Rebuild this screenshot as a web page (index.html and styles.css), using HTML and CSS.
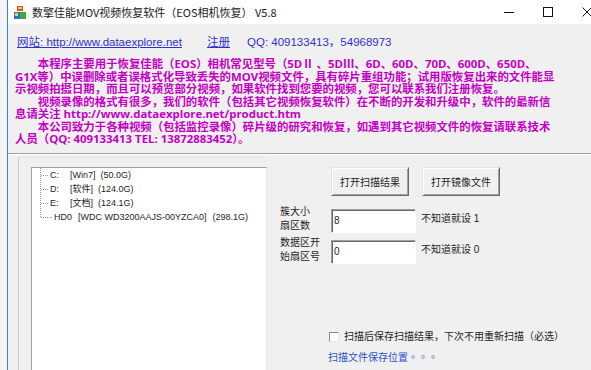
FILE: index.html
```
<html>

  <head>

    <title>
      数擎佳能MOV视频恢复软件
    </title>

    <link rel="stylesheet" href="styles.css">

  </head>

  <body>

  <div class = "window">

    <div class = "titlebar">
      <svg class = "appIcon" width = "12" height = "13" viewBox = "0 0 12 13">
        <rect x = "3" y = "0" width = "6" height = "5" fill = "#e0502a"/>
        <rect x = "4" y = "1" width = "4" height = "2" fill = "#f6c040"/>
        <rect x = "0" y = "6" width = "6" height = "7" fill = "#2f6fd0"/>
        <rect x = "6" y = "6" width = "6" height = "7" fill = "#3aa84a"/>
        <rect x = "1" y = "7" width = "3" height = "3" fill = "#f2d23c"/>
      </svg>
      <span class = "title">数擎佳能MOV视频恢复软件（EOS相机恢复） V5.8</span>
      <div class = "controls">
        <div class = "ctl">
          <svg width = "10" height = "10" viewBox = "0 0 10 10"><path d = "M0 5.5h10" stroke = "#111" stroke-width = "1"/></svg>
        </div>
        <div class = "ctl">
          <svg width = "10" height = "10" viewBox = "0 0 10 10"><rect x = "0.5" y = "0.5" width = "9" height = "9" fill = "none" stroke = "#111"/></svg>
        </div>
        <div class = "ctl">
          <svg width = "10" height = "10" viewBox = "0 0 10 10"><path d = "M0.5 0.5l9 9M9.5 0.5l-9 9" stroke = "#111"/></svg>
        </div>
      </div>
    </div>

    <div class = "header">

      <div class = "links">
        <span class = "site"><a href = "#">网站: http://www.dataexplore.net</a></span>
        <span class = "reg"><a href = "#">注册</a></span>
        <span>QQ: 409133413，54968973</span>
      </div>

      <p class = "intro">
        　　本程序主要用于恢复佳能（EOS）相机常见型号（5DⅡ 、5DⅢ、6D、60D、70D、600D、650D、<br>
        G1X等）中误删除或者误格式化导致丢失的MOV视频文件，具有碎片重组功能；试用版恢复出来的文件能显<br>
        示视频拍摄日期，而且可以预览部分视频，如果软件找到您要的视频，您可以联系我们注册恢复。<br>
        　　视频录像的格式有很多，我们的软件（包括其它视频恢复软件）在不断的开发和升级中，软件的最新信<br>
        息请关注 http://www.dataexplore.net/product.htm<br>
        　　本公司致力于各种视频（包括监控录像）碎片级的研究和恢复，如遇到其它视频文件的恢复请联系技术<br>
        人员（QQ: 409133413 TEL: 13872883452）。
      </p>

    </div>

    <div class = "sep"></div>

    <div class = "lower">

      <div class = "drives">
        <div class = "tree">
          <ul class = "branches">
            <li><span class = "drv">C:</span><span>[Win7]</span><span class = "size">(50.0G)</span></li>
            <li><span class = "drv">D:</span><span>[软件]</span><span class = "size">(124.0G)</span></li>
            <li><span class = "drv">E:</span><span>[文档]</span><span class = "size">(124.1G)</span></li>
            <li class = "disk"><span class = "drv">HD0</span><span>[WDC WD3200AAJS-00YZCA0]</span><span class = "size">(298.1G)</span></li>
          </ul>
        </div>
      </div>

      <div class = "options">

        <div class = "buttons">
          <button class = "btn">打开扫描结果</button>
          <button class = "btn">打开镜像文件</button>
        </div>

        <div class = "field first">
          <div class = "label">簇大小<br>扇区数</div>
          <input type = "text" value = "8">
          <span class = "hint">不知道就设 1</span>
        </div>

        <div class = "field second">
          <div class = "label">数据区开<br>始扇区号</div>
          <input type = "text" value = "0">
          <span class = "hint">不知道就设 0</span>
        </div>

        <div class = "check">
          <span class = "box"></span>
          <span>扫描后保存扫描结果，下次不用重新扫描（必选）</span>
        </div>

        <div class = "savePath">扫描文件保存位置<span class = "dots">。。。</span></div>

      </div>

    </div>

  </div>

  </body>

</html>
```

FILE: styles.css
```
*
{
  box-sizing: border-box;
}

html, body
{
  margin: 0;
  height: 100%;
  overflow: hidden;
}

body
{
  background: #f4f4f4;
  font-family: "Liberation Sans", "Noto Sans CJK SC", sans-serif;
  color: #1e1e1e;
}

.window
{
  margin-left: 7px;
  width: 599px;
  height: 370px;
  border-left: 1px solid #2f86d8;
  background: #f0f0f0;
}

.titlebar
{
  height: 24px;
  background: #ffffff;
  display: flex;
  align-items: center;
}

.appIcon
{
  margin-left: 6px;
}

.title
{
  margin-left: 6px;
  font-family: "Noto Sans CJK SC", sans-serif;
  font-size: 11px;
  color: #1b1b1b;
}

.controls
{
  margin-left: auto;
  display: flex;
}

.ctl
{
  width: 39px;
  height: 24px;
  display: flex;
  align-items: center;
  justify-content: center;
}

.header
{
  padding: 11px 0 0 9px;
}

.links
{
  display: flex;
  font-size: 11.5px;
  line-height: 14px;
  color: #3030c8;
}

.links a
{
  color: #3030c8;
}

.site
{
  width: 190px;
}

.reg
{
  width: 40px;
}

.intro
{
  margin: 9px 0 0 -2px;
  font-family: "Open Sans", "Noto Sans CJK SC", sans-serif;
  font-weight: bold;
  font-size: 11.4px;
  line-height: 12.5px;
  color: #c200c2;
  white-space: nowrap;
}

.sep
{
  margin-top: 7px;
  border-top: 1px solid #a0a0a0;
  border-bottom: 1px solid #ffffff;
}

.lower
{
  display: flex;
}

.drives
{
  margin: 2px 0 0 10px;
  border-top: 1px solid #e2e2e2;
  border-left: 1px solid #c8c8c8;
  padding: 9px 0 0 12px;
}

.tree
{
  width: 236px;
  height: 220px;
  background: #ffffff;
  border: 1px solid;
  border-color: #a0a0a0 #e6e6e6 #e6e6e6 #a0a0a0;
  padding-left: 8px;
}

.branches
{
  margin: 0;
  padding: 0;
  list-style: none;
  height: 49px;
  border-left: 1px dotted #9a9a9a;
  font-size: 9px;
  line-height: 14px;
  white-space: nowrap;
}

.branches li
{
  height: 14px;
}

.branches li::before
{
  content: "";
  display: inline-block;
  width: 7px;
  margin-right: 2px;
  vertical-align: middle;
  border-top: 1px dotted #9a9a9a;
}

.branches li.disk::before
{
  width: 11px;
}

.drv
{
  display: inline-block;
  width: 20px;
}

.disk .drv
{
  width: 24px;
}

.size
{
  margin-left: 5px;
}

.disk .size
{
  margin-left: 6px;
}

.options
{
  margin-left: 13px;
  padding-top: 12px;
  font-size: 10px;
  line-height: 14px;
}

.buttons
{
  display: flex;
  gap: 13px;
  margin-left: 51px;
}

.btn
{
  width: 78px;
  height: 29px;
  padding: 0;
  font-family: "Liberation Sans", "Noto Sans CJK SC", sans-serif;
  font-size: 10px;
  color: #1e1e1e;
  background: #f0f0f0;
  border: 1px solid;
  border-color: #e4e4e4 #6a6a6a #6a6a6a #e4e4e4;
  box-shadow: inset 1px 1px #ffffff, inset -1px -1px #a0a0a0;
}

.field
{
  display: flex;
  align-items: flex-end;
}

.first
{
  margin-top: 9px;
}

.second
{
  margin-top: 3px;
}

.label
{
  width: 51px;
}

.field input
{
  width: 85px;
  height: 24px;
  padding: 0 2px;
  font-family: "Liberation Sans", sans-serif;
  font-size: 10px;
  color: #1e1e1e;
  background: #ffffff;
  border: 1px solid;
  border-color: #a0a0a0 #ffffff #ffffff #a0a0a0;
  box-shadow: inset 1px 1px #696969;
  outline: none;
}

.hint
{
  margin-left: 5px;
  align-self: center;
}

.check
{
  display: flex;
  align-items: center;
  margin: 66px 0 0 49px;
}

.box
{
  width: 10px;
  height: 10px;
  margin-right: 5px;
  background: #ffffff;
  border: 1px solid;
  border-color: #8a8a8a #e8e8e8 #e8e8e8 #8a8a8a;
}

.savePath
{
  margin: 6px 0 0 48px;
  color: #2d52c8;
}

.dots
{
  font-family: "Noto Sans CJK TC", sans-serif;
}
```
